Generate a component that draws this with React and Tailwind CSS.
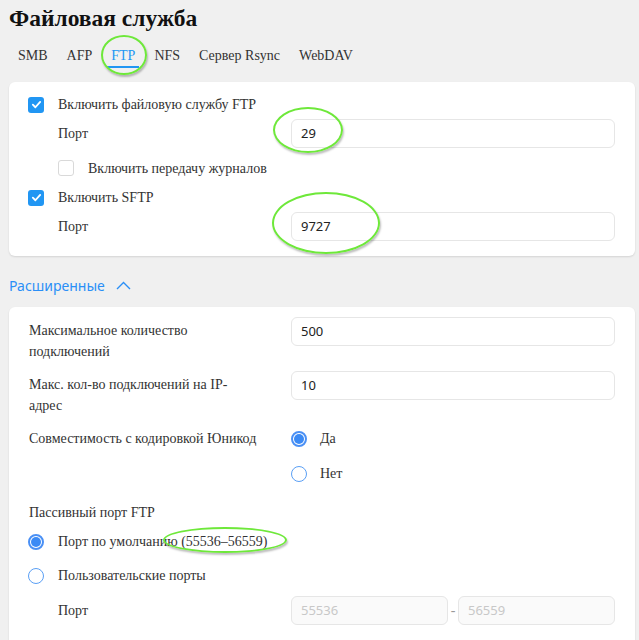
import React from 'react';

const serif = { fontFamily: '"Liberation Serif", "Times New Roman", serif' };

function Check({ on }) {
  return on ? (
    <span className="w-4 h-4 rounded-[3px] bg-[#2196f3] flex items-center justify-center shrink-0">
      <svg width="11" height="11" viewBox="0 0 12 12" fill="none">
        <path d="M2 6.2 L4.8 9 L10 3.2" stroke="white" strokeWidth="2" strokeLinecap="round" strokeLinejoin="round" />
      </svg>
    </span>
  ) : (
    <span className="w-4 h-4 rounded-[3px] border border-[#d9d9d9] bg-white shrink-0" />
  );
}

function Radio({ on }) {
  return on ? (
    <span className="w-4 h-4 rounded-full border-2 border-[#4a90f5] bg-white flex items-center justify-center shrink-0">
      <span className="w-[10px] h-[10px] rounded-full bg-[#3b8af5]" />
    </span>
  ) : (
    <span className="w-4 h-4 rounded-full border-[1.5px] border-[#5a9ff5] bg-white shrink-0" />
  );
}

function Field({ value, disabled, className = 'w-[324px]' }) {
  return (
    <div
      className={`${className} h-[29px] rounded-[6px] border border-[#e6e6e6] flex items-center px-[9px] text-[13px] ${disabled ? 'bg-[#fafafa] text-[#c8c8c8]' : 'bg-white text-[#222]'}`}
      style={{ fontFamily: '"Noto Sans", "Open Sans", sans-serif' }}
    >
      {value}
    </div>
  );
}

function Ring({ className }) {
  return (
    <span
      className={`absolute rounded-[50%] border-[2.5px] border-[#6ee83a] shadow-[1px_2px_2px_rgba(0,0,0,0.25)] pointer-events-none ${className}`}
    />
  );
}

export default function App() {
  const tabs = ['SMB', 'AFP', 'FTP', 'NFS', 'Сервер Rsync', 'WebDAV'];
  return (
    <div className="relative w-[639px] h-[640px] overflow-hidden bg-[#f0f0f0] text-[14px] text-[#333]" style={serif}>
      <h1 className="pl-[9px] pt-[3px] h-[32px] text-[23.5px] font-bold text-[#111] leading-[30px]">Файловая служба</h1>

      <div className="flex pl-[18px] h-[46px] items-center">
        {tabs.map((t) => (
          <div key={t} className="relative mr-[19px] flex flex-col items-center">
            <span className={t === 'FTP' ? 'text-[#2196f3]' : 'text-[#333]'}>{t}</span>
            {t === 'FTP' && <span className="absolute top-[21px] -left-[4px] -right-[4px] h-[2px] bg-[#2196f3]" />}
          </div>
        ))}
      </div>

      <div className="mt-[4px] ml-[9px] w-[626px] bg-white rounded-[6px] shadow-[0_1px_2px_rgba(0,0,0,0.12)] pt-[8px] pb-[15px] pl-[19px] pr-[20px]">
        <div className="h-[29px] flex items-center gap-[14px]">
          <Check on />
          <span>Включить файловую службу FTP</span>
        </div>
        <div className="h-[29px] flex items-center justify-between pl-[30px]">
          <span>Порт</span>
          <Field value="29" />
        </div>
        <div className="mt-[5px] h-[30px] flex items-center gap-[14px] pl-[30px]">
          <Check />
          <span>Включить передачу журналов</span>
        </div>
        <div className="h-[29px] flex items-center gap-[14px]">
          <Check on />
          <span>Включить SFTP</span>
        </div>
        <div className="h-[29px] flex items-center justify-between pl-[30px]">
          <span>Порт</span>
          <Field value="9727" />
        </div>
      </div>

      <div
        className="mt-[17px] mb-[10px] h-[24px] pl-[9px] flex items-center gap-[11px] text-[14px] text-[#2a8ff7]"
        style={{ fontFamily: '"Noto Sans", "Open Sans", sans-serif' }}
      >
        <span>Расширенные</span>
        <svg width="15" height="9" viewBox="0 0 15 9" fill="none">
          <path d="M1 8 L7.5 1.5 L14 8" stroke="#2a8ff7" strokeWidth="1.4" />
        </svg>
      </div>

      <div className="ml-[9px] w-[626px] h-[360px] bg-white rounded-t-[6px] shadow-[0_1px_2px_rgba(0,0,0,0.12)] pt-[10px] pl-[20px] pr-[20px]">
        <div className="flex justify-between">
          <div className="pt-[3px] leading-[21px] w-[220px]">Максимальное количество подключений</div>
          <Field value="500" />
        </div>
        <div className="mt-[9px] flex justify-between">
          <div className="pt-[3px] leading-[21px] w-[220px]">Макс. кол-во подключений на IP-адрес</div>
          <Field value="10" />
        </div>
        <div className="mt-[8px] h-[29px] flex items-center justify-between">
          <span>Совместимость с кодировкой Юникод</span>
          <div className="w-[324px] flex items-center gap-[13px]">
            <Radio on />
            <span>Да</span>
          </div>
        </div>
        <div className="mt-[6px] h-[29px] flex items-center justify-end">
          <div className="w-[324px] flex items-center gap-[13px]">
            <Radio />
            <span>Нет</span>
          </div>
        </div>
        <div className="mt-[12px] h-[24px] flex items-center">Пассивный порт FTP</div>
        <div className="mt-[3px] h-[29px] flex items-center gap-[14px] -ml-[1px]">
          <Radio on />
          <span>Порт по умолчанию (55536–56559)</span>
        </div>
        <div className="mt-[5px] h-[29px] flex items-center gap-[14px] -ml-[1px]">
          <Radio />
          <span>Пользовательские порты</span>
        </div>
        <div className="mt-[6px] h-[29px] flex items-center justify-between pl-[29px]">
          <span>Порт</span>
          <div className="w-[324px] flex items-center">
            <Field value="55536" disabled className="w-[157px]" />
            <span className="w-[10px] text-center text-[#999]">-</span>
            <Field value="56559" disabled className="w-[157px]" />
          </div>
        </div>
      </div>

      <Ring className="left-[101px] top-[35px] w-[46px] h-[40px]" />
      <Ring className="left-[273px] top-[107px] w-[70px] h-[46px]" />
      <Ring className="left-[272px] top-[192px] w-[108px] h-[62px]" />
      <Ring className="left-[163px] top-[527px] w-[124px] h-[26px]" />
    </div>
  );
}
